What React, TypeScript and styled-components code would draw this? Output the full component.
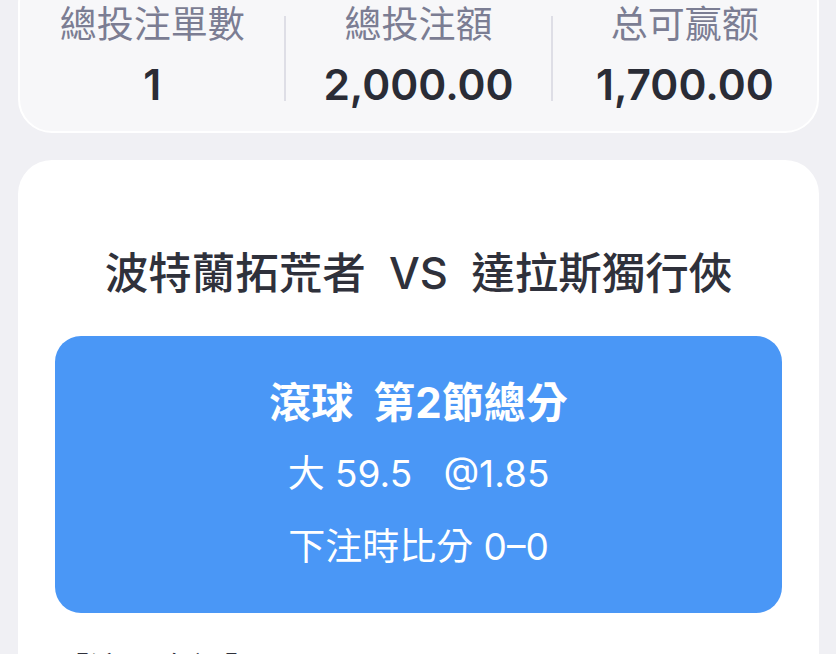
import React from "react";
import styled, { createGlobalStyle } from "styled-components";

const GlobalStyle = createGlobalStyle`
  html, body {
    margin: 0;
    padding: 0;
    background: #f0f0f4;
    overflow: hidden;
  }
  body {
    font-family: Inter, "Noto Sans CJK TC", "Noto Sans", sans-serif;
    -webkit-font-smoothing: antialiased;
  }
`;

const Page = styled.div`
  display: flex;
  flex-direction: column;
  padding: 0 17px 0 18px;
  gap: 27px;
`;

const SummaryCard = styled.div`
  margin-top: -30px;
  padding: 30px 0 18px;
  background: #f7f7f9;
  border: 2px solid #ffffff;
  border-radius: 34px;
  display: flex;
  align-items: stretch;
`;

const Stat = styled.div`
  flex: 1;
  display: flex;
  flex-direction: column;
  align-items: center;
  gap: 15px;
`;

const StatLabel = styled.div`
  font-family: "Noto Sans CJK TC", sans-serif;
  font-size: 37px;
  line-height: 40px;
  color: #7b7d93;
  font-weight: 400;
`;

const StatValue = styled.div`
  font-family: Inter, "Noto Sans", sans-serif;
  font-size: 42.5px;
  line-height: 56px;
  font-weight: 600;
  color: #2a2c36;
`;

const Divider = styled.div`
  width: 2px;
  height: 85px;
  align-self: center;
  background: #dedee6;
  margin-top: 1px;
`;

const BetCard = styled.div`
  background: #ffffff;
  border-radius: 34px;
  padding: 85px 37px 0;
  display: flex;
  flex-direction: column;
`;

const MatchTitle = styled.div`
  text-align: center;
  font-family: Inter, "Noto Sans CJK TC", sans-serif;
  font-size: 43.5px;
  line-height: 56px;
  font-weight: 500;
  color: #2f313b;
  white-space: pre;
  margin-bottom: 35px;
`;

const BetBox = styled.div`
  background: #4a97f6;
  border-radius: 26px;
  padding: 41px 0 42px;
  display: flex;
  flex-direction: column;
  align-items: center;
  color: #ffffff;
`;

const BetType = styled.div`
  font-family: Inter, "Noto Sans CJK TC", sans-serif;
  font-size: 42px;
  line-height: 52px;
  font-weight: 700;
  white-space: pre;
`;

const BetLine = styled.div<{ $gap: number }>`
  margin-top: ${(p) => p.$gap}px;
  font-family: Inter, "Noto Sans CJK TC", sans-serif;
  font-size: 37px;
  line-height: 48px;
  font-weight: 400;
  white-space: pre;
`;

const SectionLabel = styled.div`
  margin-top: 33px;
  font-family: "Noto Sans CJK TC", sans-serif;
  font-size: 34px;
  line-height: 44px;
  color: #2f313b;
`;

const stats = [
  { label: "總投注單數", value: "1" },
  { label: "總投注額", value: "2,000.00" },
  { label: "总可赢额", value: "1,700.00" },
];

export default function App() {
  return (
    <>
      <GlobalStyle />
      <Page>
        <SummaryCard>
          {stats.map((s, i) => (
            <React.Fragment key={s.label}>
              {i > 0 && <Divider />}
              <Stat>
                <StatLabel>{s.label}</StatLabel>
                <StatValue>{s.value}</StatValue>
              </Stat>
            </React.Fragment>
          ))}
        </SummaryCard>
        <BetCard>
          <MatchTitle>{"波特蘭拓荒者  VS  達拉斯獨行俠"}</MatchTitle>
          <BetBox>
            <BetType>{"滾球  第2節總分"}</BetType>
            <BetLine $gap={21}>{"大 59.5   @1.85"}</BetLine>
            <BetLine $gap={25}>{"下注時比分 0–0"}</BetLine>
          </BetBox>
          <SectionLabel>【注單資訊】</SectionLabel>
        </BetCard>
      </Page>
    </>
  );
}
